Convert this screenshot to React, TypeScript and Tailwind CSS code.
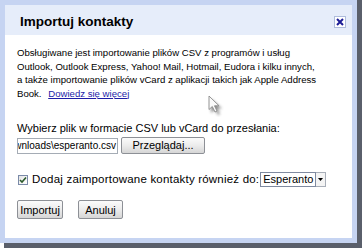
import React from 'react'

const btn =
  'border border-[#8d9096] rounded-[2px] bg-gradient-to-b from-[#fbfbfb] via-[#ececec] to-[#d6d6d6] text-[11px] text-black flex items-center justify-center'

export default function App() {
  const [addTo, setAddTo] = React.useState(true)

  return (
    <div className="relative w-[364px] h-[251px] bg-white" style={{ fontFamily: '"Liberation Sans", Arial, sans-serif' }}>
      {/* Dialog + drop shadow */}
      <div className="w-[362px] h-[248px] pr-[3px] pb-[3px] pt-[2px] pl-[2px] bg-[linear-gradient(to_right,transparent_4px,#5a5f6b_4px)]">
        <div className="w-[357px] h-[243px] -mt-[2px] -ml-[2px] bg-[#c6d4f2] p-[5px] flex flex-col">
          {/* Header */}
          <div className="h-[30px] bg-[#e6edfa] flex items-center justify-between pl-[15px] pr-[6px] pt-[3px] shrink-0">
            <h1 className="text-[13.5px] font-bold text-black leading-none">Importuj kontakty</h1>
            <button className="w-[12px] h-[12px] bg-white border border-[#aebcdc] flex items-center justify-center">
              <svg width="8" height="8" viewBox="0 0 8 8">
                <path d="M1 1 L7 7 M7 1 L1 7" stroke="#1d1d96" strokeWidth="2" />
              </svg>
            </button>
          </div>

          {/* Body */}
          <div className="flex-1 bg-white px-[12px] pt-[11px] text-black">
            <p className="text-[9.6px] leading-[13.5px] w-[300px]">
              Obsługiwane jest importowanie plików CSV z programów i usług Outlook, Outlook Express, Yahoo! Mail, Hotmail, Eudora i kilku innych, a także importowanie plików vCard z aplikacji takich jak Apple Address Book.{' '}
              <a href="#" className="ml-[4px] text-[#1c1ca8] underline">Dowiedz się więcej</a>
            </p>

            <p className="mt-[22px] text-[11px] leading-[13px]">Wybierz plik w formacie CSV lub vCard do przesłania:</p>
            <div className="flex items-center gap-[3px] mt-[2px]">
              <div className="w-[101px] h-[16px] border border-[#a5acb5] overflow-hidden whitespace-nowrap flex items-center justify-end pr-[1px] text-[10px]">
                Downloads\esperanto.csv
              </div>
              <button className={`${btn} h-[17px] w-[84px]`}>Przeglądaj...</button>
            </div>

            <div className="flex items-center mt-[17px]">
              <span
                onClick={() => setAddTo(!addTo)}
                className="w-[10px] h-[10px] mr-[4px] ml-[1px] border border-[#7a8aa8] bg-gradient-to-br from-[#e4e4e4] to-white flex items-center justify-center"
              >
                {addTo && (
                  <svg width="8" height="8" viewBox="0 0 8 8">
                    <path d="M1 4 L3 6 L7 1.5" stroke="#2b5a2b" strokeWidth="1.6" fill="none" />
                  </svg>
                )}
              </span>
              <span className="text-[11.5px] tracking-[0.2px]">Dodaj zaimportowane kontakty również do:</span>
              <div className="ml-[1px] h-[15px] flex items-stretch text-[11px]">
                <div className="w-[56px] border border-[#7f8aa0] flex items-center pl-[2px] overflow-hidden whitespace-nowrap">
                  Esperanto
                </div>
                <div className="w-[10px] border border-l-0 border-[#a8aeb8] bg-[#f4f4f4] flex items-center justify-center">
                  <svg width="5" height="3" viewBox="0 0 5 3">
                    <path d="M0 0 H5 L2.5 3 Z" fill="#000" />
                  </svg>
                </div>
              </div>
            </div>

            <div className="flex gap-[15px] mt-[12px]">
              <button className={`${btn} h-[19px] w-[46px]`}>Importuj</button>
              <button className={`${btn} h-[19px] w-[45px]`}>Anuluj</button>
            </div>
          </div>
        </div>
      </div>

      {/* Mouse pointer caught in the screenshot */}
      <svg className="absolute left-[208px] top-[95px]" width="18" height="22" viewBox="0 0 18 22">
        <defs>
          <filter id="cursorShadow" x="-50%" y="-50%" width="200%" height="200%">
            <feGaussianBlur stdDeviation="1.6" />
          </filter>
        </defs>
        <path d="M3 4 L3 18 L7 14.5 L10 20 L12 19 L9.5 13.5 L14 13.5 Z" fill="#333" opacity="0.55" filter="url(#cursorShadow)" />
        <path d="M1 1 L1 14.5 L4.3 11.5 L7 17 L9 16 L6.5 10.8 L11 10.8 Z" fill="#fafafa" stroke="#8a8a8a" strokeWidth="0.9" strokeLinejoin="round" />
      </svg>
    </div>
  )
}
